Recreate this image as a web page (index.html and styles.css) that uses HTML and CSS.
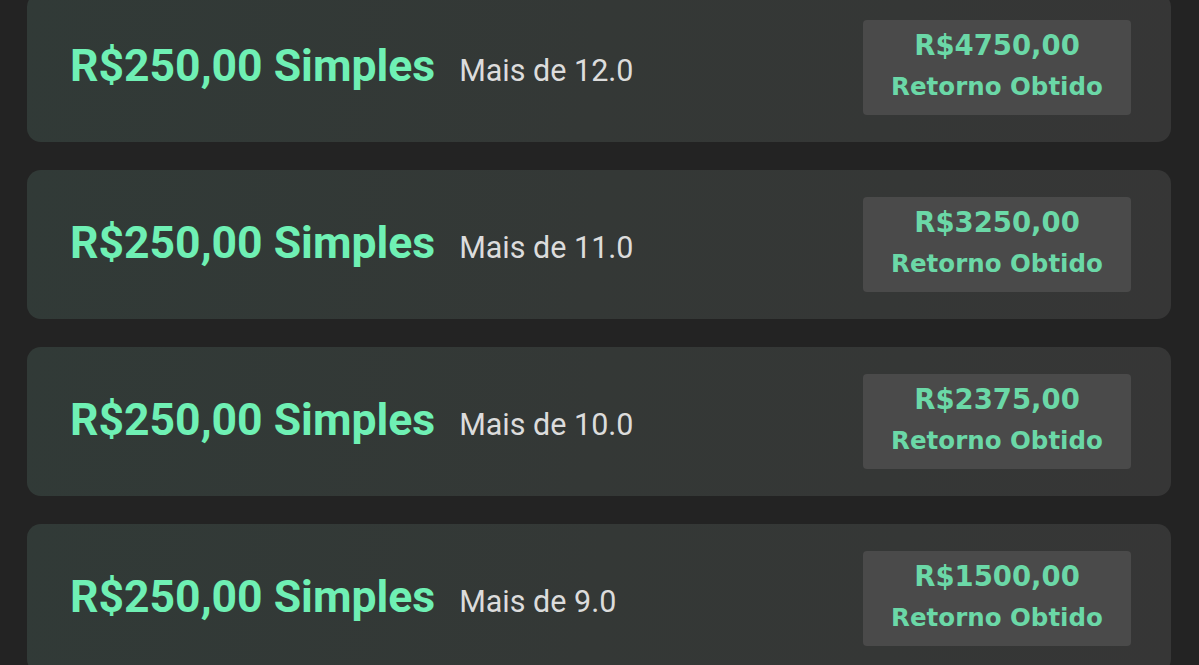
FILE: index.html
```html
<!DOCTYPE html>
<html lang="pt-BR">
<head>
  <meta charset="UTF-8">
  <title>Retornos</title>
  <link rel="stylesheet" href="styles.css">
</head>
<body>
  <div class="list">
    <div class="bet">
      <div class="info">
        <span class="stake">R$250,00 Simples</span>
        <span class="market">Mais de 12.0</span>
      </div>
      <div class="result">
        <span class="amount">R$4750,00</span>
        <span class="label">Retorno Obtido</span>
      </div>
    </div>

    <div class="bet">
      <div class="info">
        <span class="stake">R$250,00 Simples</span>
        <span class="market">Mais de 11.0</span>
      </div>
      <div class="result">
        <span class="amount">R$3250,00</span>
        <span class="label">Retorno Obtido</span>
      </div>
    </div>

    <div class="bet">
      <div class="info">
        <span class="stake">R$250,00 Simples</span>
        <span class="market">Mais de 10.0</span>
      </div>
      <div class="result">
        <span class="amount">R$2375,00</span>
        <span class="label">Retorno Obtido</span>
      </div>
    </div>

    <div class="bet">
      <div class="info">
        <span class="stake">R$250,00 Simples</span>
        <span class="market">Mais de 9.0</span>
      </div>
      <div class="result">
        <span class="amount">R$1500,00</span>
        <span class="label">Retorno Obtido</span>
      </div>
    </div>
  </div>
</body>
</html>
```

FILE: styles.css
```css
body {
  background-color: #232323;
  margin: 0;
  height: 100vh;
  overflow: hidden;
  font-family: Roboto, 'Noto Sans', sans-serif;
}

.list {
  display: flex;
  flex-direction: column;
  gap: 28px;
  margin: -7px 28px 0 27px;
}

.bet {
  display: flex;
  align-items: center;
  justify-content: space-between;
  height: 149px;
  box-sizing: border-box;
  padding: 0 40px 0 43px;
  border-radius: 14px;
  background: linear-gradient(100deg, #313a37 0%, #343836 50%, #363636 100%);
}

.info {
  display: flex;
  align-items: baseline;
  gap: 24px;
  padding-bottom: 4px;
}

.stake {
  color: #6ff0b4;
  font-size: 44.5px;
  font-weight: 700;
}

.market {
  color: #dcdcdc;
  font-size: 30.5px;
}

.result {
  display: flex;
  flex-direction: column;
  justify-content: center;
  align-items: center;
  width: 268px;
  height: 95px;
  box-sizing: border-box;
  padding-bottom: 3px;
  background-color: #4a4a4a;
  border-radius: 4px;
  color: #6bd8a7;
  font-family: 'DejaVu Sans', Verdana, sans-serif;
  font-weight: bold;
  line-height: 42px;
}

.amount {
  font-size: 27.5px;
}

.label {
  font-size: 24.5px;
}
```
